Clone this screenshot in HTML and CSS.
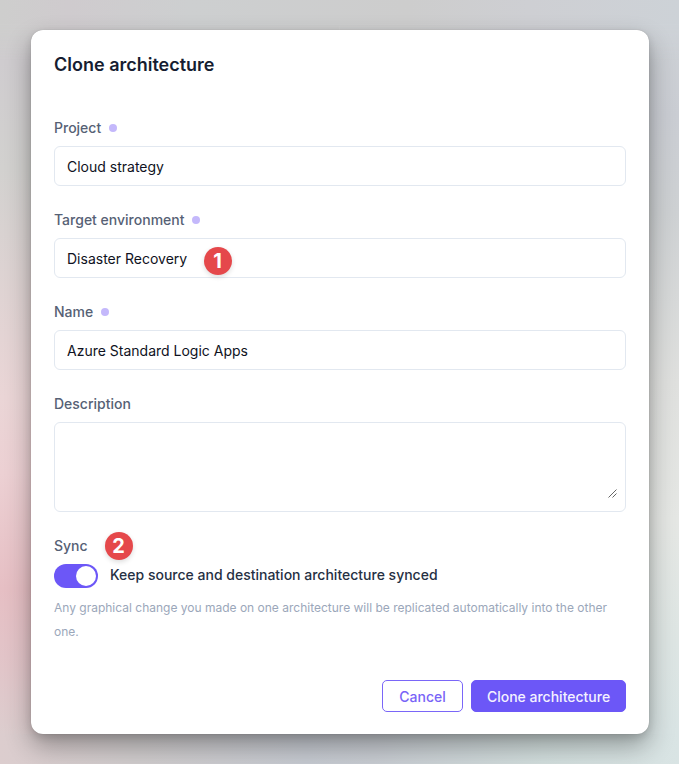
FILE: index.html
```html
<!DOCTYPE html>
<html lang="en">
<head>
<meta charset="utf-8">
<title>Clone architecture</title>
<link rel="stylesheet" href="styles.css">
</head>
<body>
<main class="dialog">
  <h1 class="title">Clone architecture</h1>
  <form class="form">
    <div class="field">
      <label class="label required" for="project">Project</label>
      <input class="input" id="project" value="Cloud strategy">
    </div>
    <div class="field">
      <label class="label required" for="env">Target environment</label>
      <input class="input" id="env" value="Disaster Recovery">
      <span class="marker marker-env">1</span>
    </div>
    <div class="field">
      <label class="label required" for="name">Name</label>
      <input class="input" id="name" value="Azure Standard Logic Apps">
    </div>
    <div class="field">
      <label class="label" for="description">Description</label>
      <div class="textarea">
        <div class="textarea-text" id="description"></div>
        <svg class="grip" width="9" height="9" viewBox="0 0 9 9"><path d="M.5 8.5l8-8M4.5 8.5l4-4"/></svg>
      </div>
    </div>
    <div class="field">
      <span class="label">Sync</span>
      <span class="marker marker-sync">2</span>
      <div class="switch-row">
        <span class="switch"><span class="knob"></span></span>
        <span class="switch-text">Keep source and destination architecture synced</span>
      </div>
      <p class="hint">Any graphical change you made on one architecture will be replicated automatically into the other one.</p>
    </div>
  </form>
  <footer class="actions">
    <button class="button">Cancel</button>
    <button class="button primary">Clone architecture</button>
  </footer>
</main>
</body>
</html>
```

FILE: styles.css
```css
* { box-sizing: border-box; }

html { height: 100%; overflow: hidden; }

body {
  margin: 0;
  height: 764px;
  padding: 30px 30px 30px 30.5px;
  font: 14px/24px Inter, sans-serif;
  color: #0f172a;
  background:
    linear-gradient(90deg, #dccdce 0%, #d0cccd 20%, #c6cad1 45%, #c8ccd2 55%, #d2dedd 80%, #d9e4e4 100%) 0 734px / 100% 30px no-repeat,
    linear-gradient(180deg, #cececd 0%, #cfcccf 8%, #d2d1cf 22%, #ead5d6 52%, #ecd0d3 62%, #e6bfc4 77%, #e2c4c8 86%, #dccdce 96%, #dccdce 100%) 0 0 / 50% 100% no-repeat,
    linear-gradient(180deg, #ced2d6 0%, #cacdd3 15%, #ced1d3 28%, #dfe0de 50%, #e5e7e4 68%, #dde5e3 84%, #d9e4e4 96%, #d9e4e4 100%) 100% 0 / 50% 100% no-repeat;
}

body::before {
  content: "";
  position: absolute;
  inset: 0 0 auto;
  height: 60px;
  background: linear-gradient(90deg, #cececd 0%, #cfcbce 10%, #cdcfd0 28%, #cdcdcd 60%, #cecfd3 78%, #cdd2d7 100%);
  mask-image: linear-gradient(#000 40%, transparent);
}

.dialog {
  position: relative;
  width: 618.5px;
  height: 703.5px;
  padding: 23px 23px 0 23.5px;
  background: #fff;
  border-radius: 12px;
  box-shadow: 0 12px 26px rgba(0, 0, 0, .32), 0 3px 8px rgba(0, 0, 0, .12), 0 0 1px rgba(0, 0, 0, .25);
}

.title {
  margin: 0 0 39px;
  font-size: 18px;
  line-height: 24px;
  font-weight: 600;
  color: #161d31;
}

.form {
  display: flex;
  flex-direction: column;
  gap: 22px;
}

.field {
  position: relative;
  display: flex;
  flex-direction: column;
  gap: 6px;
}

.label {
  display: flex;
  align-items: center;
  gap: 8px;
  height: 24px;
  font-weight: 500;
  color: #566175;
}

.required::after {
  content: "";
  width: 8px;
  height: 8px;
  border-radius: 50%;
  background: #c4b8fb;
}

.input {
  width: 100%;
  height: 40px;
  padding: 0 12px;
  border: 1px solid #e2e8f0;
  border-radius: 6px;
  background: #fff;
  font: inherit;
  color: #0f1222;
  outline: none;
}

.textarea {
  display: flex;
  align-items: flex-end;
  height: 90px;
  padding: 8px 8px 13px 12px;
  border: 1px solid #e2e8f0;
  border-radius: 6px;
}

.textarea-text { flex: 1; }

.grip {
  fill: none;
  stroke: #666;
  stroke-width: 1;
}

.marker {
  position: absolute;
  width: 28px;
  height: 28px;
  border-radius: 50%;
  background: #e5484b;
  box-shadow: 0 2px 5px rgba(0, 0, 0, .14);
  color: #fff;
  font-size: 20px;
  line-height: 28px;
  font-weight: 700;
  text-align: center;
}

.marker-env { left: 149.5px; top: 39px; }
.marker-sync { left: 50.5px; top: -2.3px; }

.switch-row {
  display: flex;
  align-items: center;
  gap: 12px;
  height: 24px;
}

.switch {
  display: flex;
  justify-content: flex-end;
  width: 44px;
  height: 24px;
  padding: 2px;
  border-radius: 12px;
  background: #6c57f7;
}

.knob {
  width: 20px;
  height: 20px;
  border-radius: 50%;
  background: #fff;
}

.switch-text {
  margin-top: -2px;
  font-weight: 500;
  color: #263043;
}

.hint {
  margin: 2px 0 0;
  font-size: 12px;
  line-height: 24px;
  color: #9ba7ba;
}

.actions {
  display: flex;
  justify-content: flex-end;
  gap: 8px;
  margin-top: 36px;
}

.button {
  width: 81px;
  height: 32px;
  padding: 1px 0 0;
  border: 1px solid #7a66f8;
  border-radius: 5px;
  background: #fff;
  color: #7864f7;
  font: 500 14px/24px Inter, sans-serif;
}

.primary {
  width: 155px;
  border-color: #6c57f7;
  background: #6c57f7;
  color: #f4f2ff;
}
```
